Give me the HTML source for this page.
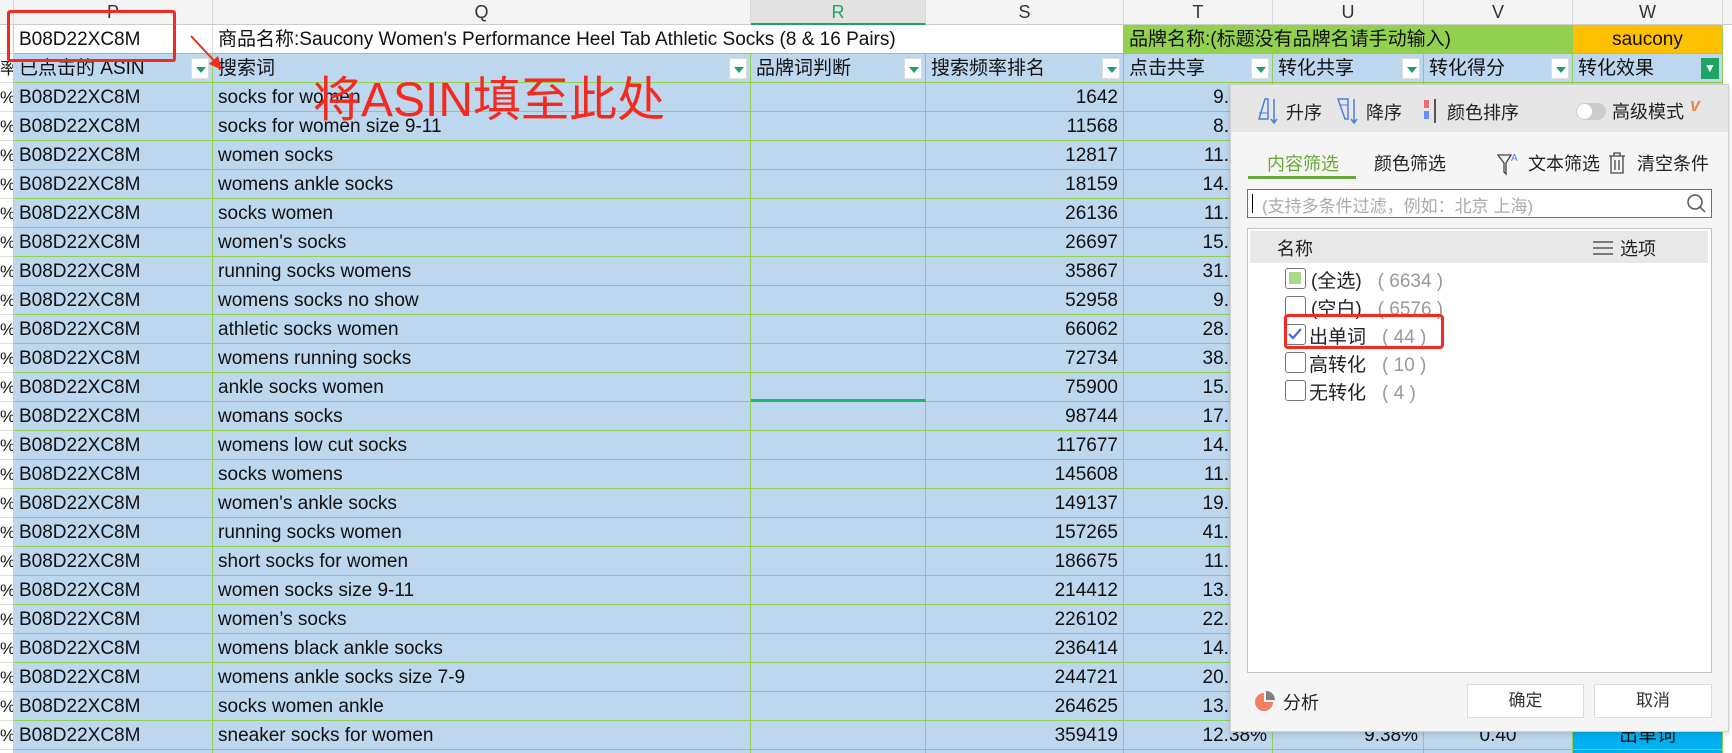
<!DOCTYPE html>
<html style="width:1732px;height:753px;overflow:hidden"><head><meta charset="utf-8"><style>
*{margin:0;padding:0;box-sizing:border-box}
body{width:1732px;height:753px;overflow:hidden;background:#fff;font-family:"Liberation Sans","Noto Sans CJK SC",sans-serif;position:relative;color:#111}
.a{position:absolute}
.ch{position:absolute;top:0;height:25px;background:#f4f4f4;border-right:1px solid #d8d8d8;border-bottom:1px solid #ccc;text-align:center;font-size:18px;line-height:25px;color:#333}
.r{position:absolute;left:0;width:1732px;height:29px}
.c{position:absolute;top:0;height:29px;border-right:1px solid #92d050;border-bottom:1px solid #92d050;background:#bdd7ee;font-size:19px;line-height:29px;white-space:nowrap;overflow:hidden;padding:0 5px}
.s{left:0;width:14px;background:#fff;border-right:1px solid #ccc;border-bottom:1px solid #ddd;padding:0;text-align:right;font-size:17px}
.p{left:14px;width:199px}.q{left:213px;width:538px}.rr{left:751px;width:175px}.ss{left:926px;width:198px;text-align:right}.t{left:1124px;width:149px;text-align:right}.u{left:1273px;width:151px;text-align:right}.v{left:1424px;width:149px;text-align:center}.w{left:1573px;width:150px;text-align:center}
.fb{position:absolute;right:3px;top:4px;width:18px;height:21px;background:#fff;border:1px solid #ddd}
.fb:after{content:"";position:absolute;left:4px;top:8px;border-left:5px solid transparent;border-right:5px solid transparent;border-top:6px solid #1e9e6a}
.pt{font-size:18px;color:#222}
.cb{position:absolute;width:21px;height:21px;border:1.5px solid #777;border-radius:3px;background:#fff}
.it{position:absolute;font-size:19px;color:#222}
.it span{color:#999;margin-left:16px}
</style></head><body>
<div class="ch" style="left:0;width:14px"></div>
<div class="ch" style="left:14px;width:199px">P</div>
<div class="ch" style="left:213px;width:538px">Q</div>
<div class="ch" style="left:751px;width:175px;background:#e2e2e2;color:#21a366;border-bottom:2px solid #21a366">R</div>
<div class="ch" style="left:926px;width:198px">S</div>
<div class="ch" style="left:1124px;width:149px">T</div>
<div class="ch" style="left:1273px;width:151px">U</div>
<div class="ch" style="left:1424px;width:149px">V</div>
<div class="ch" style="left:1573px;width:150px">W</div>
<div class="ch" style="left:1723px;width:9px;border-right:0"></div>
<div class="r" style="top:25px;height:29px">
<div class="c s"></div>
<div class="c p" style="background:#fff;border-right:1px solid #ddd">B08D22XC8M</div>
<div class="c" style="left:213px;width:911px;background:#fff">商品名称:Saucony Women's Performance Heel Tab Athletic Socks (8 &amp; 16 Pairs)</div>
<div class="c" style="left:1124px;width:449px;background:#92d050">品牌名称:(标题没有品牌名请手动输入)</div>
<div class="c w" style="background:#ffc000">saucony</div>
</div>
<div class="r" style="top:54px">
<div class="c s">率</div>
<div class="c p">已点击的 ASIN<i class="fb"></i></div>
<div class="c q">搜索词<i class="fb"></i></div>
<div class="c rr">品牌词判断<i class="fb"></i></div>
<div class="c ss" style="text-align:left">搜索频率排名<i class="fb"></i></div>
<div class="c t" style="text-align:left">点击共享<i class="fb"></i></div>
<div class="c u" style="text-align:left">转化共享<i class="fb"></i></div>
<div class="c v" style="text-align:left">转化得分<i class="fb"></i></div>
<div class="c w" style="text-align:left">转化效果<i class="a" style="right:3px;top:4px;width:18px;height:21px;background:#21a366;color:#fff;font-size:12px;line-height:21px;text-align:center;font-style:normal">▼</i></div>
</div>
<div class="r" style="top:83px"><div class="c s">%</div><div class="c p">B08D22XC8M</div><div class="c q">socks for women</div><div class="c rr"></div><div class="c ss">1642</div><div class="c t">9.85%</div><div class="c u"></div><div class="c v"></div><div class="c w"></div></div>
<div class="r" style="top:112px"><div class="c s">%</div><div class="c p">B08D22XC8M</div><div class="c q">socks for women size 9-11</div><div class="c rr"></div><div class="c ss">11568</div><div class="c t">8.12%</div><div class="c u"></div><div class="c v"></div><div class="c w"></div></div>
<div class="r" style="top:141px"><div class="c s">%</div><div class="c p">B08D22XC8M</div><div class="c q">women socks</div><div class="c rr"></div><div class="c ss">12817</div><div class="c t">11.20%</div><div class="c u"></div><div class="c v"></div><div class="c w"></div></div>
<div class="r" style="top:170px"><div class="c s">%</div><div class="c p">B08D22XC8M</div><div class="c q">womens ankle socks</div><div class="c rr"></div><div class="c ss">18159</div><div class="c t">14.30%</div><div class="c u"></div><div class="c v"></div><div class="c w"></div></div>
<div class="r" style="top:199px"><div class="c s">%</div><div class="c p">B08D22XC8M</div><div class="c q">socks women</div><div class="c rr"></div><div class="c ss">26136</div><div class="c t">11.10%</div><div class="c u"></div><div class="c v"></div><div class="c w"></div></div>
<div class="r" style="top:228px"><div class="c s">%</div><div class="c p">B08D22XC8M</div><div class="c q">women's socks</div><div class="c rr"></div><div class="c ss">26697</div><div class="c t">15.10%</div><div class="c u"></div><div class="c v"></div><div class="c w"></div></div>
<div class="r" style="top:257px"><div class="c s">%</div><div class="c p">B08D22XC8M</div><div class="c q">running socks womens</div><div class="c rr"></div><div class="c ss">35867</div><div class="c t">31.10%</div><div class="c u"></div><div class="c v"></div><div class="c w"></div></div>
<div class="r" style="top:286px"><div class="c s">%</div><div class="c p">B08D22XC8M</div><div class="c q">womens socks no show</div><div class="c rr"></div><div class="c ss">52958</div><div class="c t">9.10%</div><div class="c u"></div><div class="c v"></div><div class="c w"></div></div>
<div class="r" style="top:315px"><div class="c s">%</div><div class="c p">B08D22XC8M</div><div class="c q">athletic socks women</div><div class="c rr"></div><div class="c ss">66062</div><div class="c t">28.10%</div><div class="c u"></div><div class="c v"></div><div class="c w"></div></div>
<div class="r" style="top:344px"><div class="c s">%</div><div class="c p">B08D22XC8M</div><div class="c q">womens running socks</div><div class="c rr"></div><div class="c ss">72734</div><div class="c t">38.10%</div><div class="c u"></div><div class="c v"></div><div class="c w"></div></div>
<div class="r" style="top:373px"><div class="c s">%</div><div class="c p">B08D22XC8M</div><div class="c q">ankle socks women</div><div class="c rr" style="border-bottom:3px solid #1fb56b"></div><div class="c ss">75900</div><div class="c t">15.10%</div><div class="c u"></div><div class="c v"></div><div class="c w"></div></div>
<div class="r" style="top:402px"><div class="c s">%</div><div class="c p">B08D22XC8M</div><div class="c q">womans socks</div><div class="c rr"></div><div class="c ss">98744</div><div class="c t">17.10%</div><div class="c u"></div><div class="c v"></div><div class="c w"></div></div>
<div class="r" style="top:431px"><div class="c s">%</div><div class="c p">B08D22XC8M</div><div class="c q">womens low cut socks</div><div class="c rr"></div><div class="c ss">117677</div><div class="c t">14.10%</div><div class="c u"></div><div class="c v"></div><div class="c w"></div></div>
<div class="r" style="top:460px"><div class="c s">%</div><div class="c p">B08D22XC8M</div><div class="c q">socks womens</div><div class="c rr"></div><div class="c ss">145608</div><div class="c t">11.10%</div><div class="c u"></div><div class="c v"></div><div class="c w"></div></div>
<div class="r" style="top:489px"><div class="c s">%</div><div class="c p">B08D22XC8M</div><div class="c q">women's ankle socks</div><div class="c rr"></div><div class="c ss">149137</div><div class="c t">19.10%</div><div class="c u"></div><div class="c v"></div><div class="c w"></div></div>
<div class="r" style="top:518px"><div class="c s">%</div><div class="c p">B08D22XC8M</div><div class="c q">running socks women</div><div class="c rr"></div><div class="c ss">157265</div><div class="c t">41.10%</div><div class="c u"></div><div class="c v"></div><div class="c w"></div></div>
<div class="r" style="top:547px"><div class="c s">%</div><div class="c p">B08D22XC8M</div><div class="c q">short socks for women</div><div class="c rr"></div><div class="c ss">186675</div><div class="c t">11.10%</div><div class="c u"></div><div class="c v"></div><div class="c w"></div></div>
<div class="r" style="top:576px"><div class="c s">%</div><div class="c p">B08D22XC8M</div><div class="c q">women socks size 9-11</div><div class="c rr"></div><div class="c ss">214412</div><div class="c t">13.10%</div><div class="c u"></div><div class="c v"></div><div class="c w"></div></div>
<div class="r" style="top:605px"><div class="c s">%</div><div class="c p">B08D22XC8M</div><div class="c q">women’s socks</div><div class="c rr"></div><div class="c ss">226102</div><div class="c t">22.10%</div><div class="c u"></div><div class="c v"></div><div class="c w"></div></div>
<div class="r" style="top:634px"><div class="c s">%</div><div class="c p">B08D22XC8M</div><div class="c q">womens black ankle socks</div><div class="c rr"></div><div class="c ss">236414</div><div class="c t">14.10%</div><div class="c u"></div><div class="c v"></div><div class="c w"></div></div>
<div class="r" style="top:663px"><div class="c s">%</div><div class="c p">B08D22XC8M</div><div class="c q">womens ankle socks size 7-9</div><div class="c rr"></div><div class="c ss">244721</div><div class="c t">20.10%</div><div class="c u"></div><div class="c v"></div><div class="c w"></div></div>
<div class="r" style="top:692px"><div class="c s">%</div><div class="c p">B08D22XC8M</div><div class="c q">socks women ankle</div><div class="c rr"></div><div class="c ss">264625</div><div class="c t">13.10%</div><div class="c u"></div><div class="c v"></div><div class="c w"></div></div>
<div class="r" style="top:721px"><div class="c s">%</div><div class="c p">B08D22XC8M</div><div class="c q">sneaker socks for women</div><div class="c rr"></div><div class="c ss">359419</div><div class="c t">12.38%</div><div class="c u">9.38%</div><div class="c v">0.40</div><div class="c w" style="background:#00b0f0">出单词</div></div>
<div class="r" style="top:750px;height:3px;overflow:hidden"><div class="c s"></div><div class="c p"></div><div class="c q"></div><div class="c rr"></div><div class="c ss"></div><div class="c t"></div><div class="c u"></div><div class="c v"></div><div class="c w" style="background:#00b0f0"></div></div>

<div class="a" style="left:7px;top:10px;width:169px;height:52px;border:3px solid #f52a1e;border-radius:3px"></div>
<svg class="a" style="left:185px;top:30px" width="45" height="45"><line x1="6" y1="6" x2="34" y2="36" stroke="#f52a1e" stroke-width="2"/><polygon points="37,40 24,34 33,26" fill="#f52a1e"/></svg>
<div class="a" style="left:313px;top:72px;font-size:48px;line-height:58px;color:#f52a1e;white-space:nowrap">将ASIN填至此处</div>

<div class="a" style="left:1230px;top:84px;width:499px;height:648px;background:#f5f5f5;border:1px solid #d0d0d0;box-shadow:0 2px 6px rgba(0,0,0,.15)">
 <div class="a" style="left:0;top:0;width:497px;height:47px;background:#e6e6e6"></div>
 <svg class="a" style="left:25px;top:12px" width="24" height="28"><path d="M3 22 L9 2 H12 V22 Z" fill="none" stroke="#4a7fe0" stroke-width="1.5"/><path d="M3 16h9" stroke="#4a7fe0"/><path d="M18 2v24M15 22l3 4 3-4" stroke="#4a7fe0" fill="none" stroke-width="1.5"/></svg>
 <div class="a pt" style="left:55px;top:14px">升序</div>
 <svg class="a" style="left:105px;top:12px" width="24" height="28"><path d="M2 2 H12 V22 H9 Z" fill="none" stroke="#4a7fe0" stroke-width="1.5"/><path d="M4 8h8" stroke="#4a7fe0"/><path d="M18 2v24M15 22l3 4 3-4" stroke="#4a7fe0" fill="none" stroke-width="1.5"/></svg>
 <div class="a pt" style="left:135px;top:14px">降序</div>
 <div class="a" style="left:193px;top:15px;width:5px;height:8px;background:#ef6c6c"></div>
 <div class="a" style="left:193px;top:26px;width:5px;height:8px;background:#6c8ef0"></div>
 <div class="a" style="left:203px;top:14px;width:1.5px;height:24px;background:#555"></div>
 <div class="a pt" style="left:216px;top:14px">颜色排序</div>
 <div class="a" style="left:345px;top:18px;width:30px;height:17px;border-radius:9px;background:#ccc"></div>
 <div class="a" style="left:346px;top:19px;width:15px;height:15px;border-radius:50%;background:#fff"></div>
 <div class="a pt" style="left:381px;top:13px">高级模式</div>
 <div class="a" style="left:459px;top:10px;font-size:18px;color:#f08a3c;font-weight:bold;font-style:italic">v</div>
 <div class="a" style="left:36px;top:65px;font-size:18px;color:#6aa83a">内容筛选</div>
 <div class="a" style="left:17px;top:91px;width:108px;height:3px;background:#6aa83a"></div>
 <div class="a pt" style="left:143px;top:65px">颜色筛选</div>
 <svg class="a" style="left:266px;top:66px" width="22" height="26"><path d="M1 4 H14 L9 12 V23 L7 21 V12 Z" fill="none" stroke="#444" stroke-width="1.3"/><text x="14" y="10" font-size="10" fill="#4a7fe0" font-family="Liberation Sans">A</text></svg>
 <div class="a pt" style="left:297px;top:65px">文本筛选</div>
 <svg class="a" style="left:376px;top:66px" width="22" height="24"><path d="M2 5h16M7 5V2h6v3M4 5v17h12V5M8 9v10M12 9v10" fill="none" stroke="#444" stroke-width="1.3"/></svg>
 <div class="a pt" style="left:406px;top:65px">清空条件</div>
 <div class="a" style="left:16px;top:104px;width:465px;height:29px;background:#fff;border:1.5px solid #2f7be0">
  <div class="a" style="left:4px;top:4px;width:1px;height:19px;background:#000"></div>
  <div class="a" style="left:14px;top:2px;font-size:17px;color:#aaa">(支持多条件过滤，例如：北京 上海)</div>
  <svg class="a" style="left:438px;top:3px" width="22" height="22"><circle cx="9" cy="9" r="7" fill="none" stroke="#555" stroke-width="1.5"/><path d="M14 14l5 5" stroke="#555" stroke-width="1.5"/></svg>
 </div>
 <div class="a" style="left:16px;top:143px;width:465px;height:445px;background:#fff;border:1.5px solid #bcc4cc">
  <div class="a" style="left:2px;top:2px;width:458px;height:32px;background:#e8e8e8"></div>
  <div class="a pt" style="left:29px;top:6px">名称</div>
  <svg class="a" style="left:345px;top:11px" width="20" height="16"><path d="M0 2h20M0 8h20M0 14h20" stroke="#555" stroke-width="1.5"/></svg>
  <div class="a pt" style="left:372px;top:6px">选项</div>
  <div class="cb" style="left:37px;top:39px"><div class="a" style="left:3px;top:3px;width:12px;height:12px;background:#acd88e"></div></div>
  <div class="it" style="left:63px;top:37px">(全选)<span>( 6634 )</span></div>
  <div class="cb" style="left:37px;top:67px"></div>
  <div class="it" style="left:63px;top:65px">(空白)<span>( 6576 )</span></div>
  <div class="cb" style="left:37px;top:95px"><svg class="a" style="left:1px;top:1px" width="16" height="16"><path d="M2 8l4 4 8-9" fill="none" stroke="#3a6ed8" stroke-width="2.2"/></svg></div>
  <div class="it" style="left:61px;top:93px">出单词<span>( 44 )</span></div>
  <div class="cb" style="left:37px;top:123px"></div>
  <div class="it" style="left:61px;top:121px">高转化<span>( 10 )</span></div>
  <div class="cb" style="left:37px;top:151px"></div>
  <div class="it" style="left:61px;top:149px">无转化<span>( 4 )</span></div>
 </div>
 <div class="a" style="left:53px;top:229px;width:160px;height:35px;border:3.5px solid #f52a1e;border-radius:4px"></div>
 <svg class="a" style="left:23px;top:605px" width="22" height="22"><path d="M10 3 A9 9 0 1 0 19 12 H10 Z" fill="#f08060"/><path d="M12 1 A9 9 0 0 1 21 10 H12 Z" fill="#808080"/></svg>
 <div class="a pt" style="left:52px;top:604px">分析</div>
 <div class="a" style="left:236px;top:599px;width:117px;height:34px;background:#fff;border:1px solid #ddd;text-align:center;line-height:32px;font-size:17px;color:#333">确定</div>
 <div class="a" style="left:363px;top:599px;width:118px;height:34px;background:#fff;border:1px solid #ddd;text-align:center;line-height:32px;font-size:17px;color:#333">取消</div>
</div>
</body></html>
